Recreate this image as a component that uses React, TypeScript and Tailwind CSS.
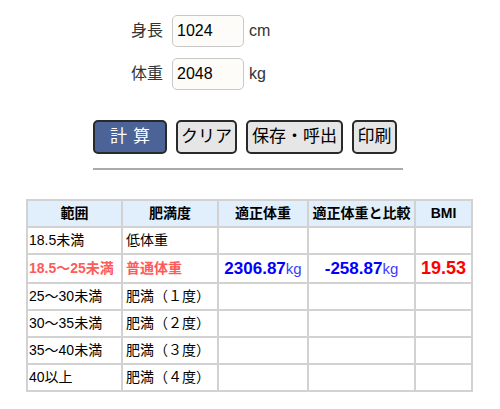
import React from 'react';

const font = "font-['Liberation_Sans','Noto_Sans_CJK_JP',sans-serif]";

type Row = { range: string; level: string; hit?: boolean };

const rows: Row[] = [
  { range: '18.5未満', level: '低体重' },
  { range: '18.5～25未満', level: '普通体重', hit: true },
  { range: '25～30未満', level: '肥満（１度）' },
  { range: '30～35未満', level: '肥満（２度）' },
  { range: '35～40未満', level: '肥満（３度）' },
  { range: '40以上', level: '肥満（４度）' },
];

const Field: React.FC<{ label: string; value: string; unit: string }> = ({ label, value, unit }) => (
  <div className="flex items-center">
    <span className="w-[32px] text-[16px] text-[#333]">{label}</span>
    <div className="ml-[9px] w-[72px] h-[32px] border border-[#c8c8c8] rounded-[5px] bg-[#fdfcf8] flex items-center px-[4px] text-[16px] text-black">
      {value}
    </div>
    <span className="ml-[5px] text-[16px] text-[#333]">{unit}</span>
  </div>
);

const Btn: React.FC<{ children: React.ReactNode; primary?: boolean; w: string }> = ({ children, primary, w }) => (
  <button
    className={`${w} h-[34px] rounded-[5px] border-2 border-[#2a2a2a] text-[17px] flex items-center justify-center ${
      primary ? 'bg-[#4b6397] text-white tracking-[6px] pl-[6px]' : 'bg-[#e6e6e6] text-black'
    }`}
  >
    {children}
  </button>
);

export default function App() {
  return (
    <div className={`${font} w-[500px] h-[409px] bg-white overflow-hidden`}>
      {/* 入力 */}
      <div className="pt-[15px] pl-[131px] flex flex-col gap-[11px]">
        <Field label="身長" value="1024" unit="cm" />
        <Field label="体重" value="2048" unit="kg" />
      </div>

      {/* ボタン */}
      <div className="w-[310px] ml-[93px] mt-[30px]">
        <div className="flex gap-[9px]">
          <Btn primary w="w-[74px]">計算</Btn>
          <Btn w="w-[61px]">クリア</Btn>
          <Btn w="w-[97px]">保存・呼出</Btn>
          <Btn w="w-[45px]">印刷</Btn>
        </div>
        <div className="mt-[14px] h-[2px] bg-[#aaaaaa]" />
      </div>

      {/* 結果テーブル */}
      <table className="ml-[26px] mt-[29px] border-collapse text-[14px] text-black table-fixed w-[445px]">
        <colgroup>
          <col className="w-[95px]" />
          <col className="w-[96px]" />
          <col className="w-[90px]" />
          <col className="w-[107px]" />
          <col className="w-[57px]" />
        </colgroup>
        <thead>
          <tr className="h-[27px] bg-[#e1eefb]">
            {['範囲', '肥満度', '適正体重', '適正体重と比較', 'BMI'].map((h) => (
              <th key={h} className="border-2 border-[#d2d2d2] font-bold text-center p-0">
                {h}
              </th>
            ))}
          </tr>
        </thead>
        <tbody>
          {rows.map((r) => (
            <tr key={r.range} className={r.hit ? 'h-[28px]' : 'h-[27px]'}>
              <td className={`border-2 border-[#d2d2d2] px-[1px] whitespace-nowrap ${r.hit ? 'text-[#ff5a5a] font-bold' : ''}`}>
                {r.range}
              </td>
              <td className={`border-2 border-[#d2d2d2] px-[3px] whitespace-nowrap ${r.hit ? 'text-[#ff5a5a] font-bold' : ''}`}>
                {r.level}
              </td>
              <td className="border-2 border-[#d2d2d2] text-center whitespace-nowrap text-[#0000ff]">
                {r.hit && (
                  <>
                    <span className="font-bold text-[17px]">2306.87</span>
                    <span className="text-[15px] text-[#3b3bff]">kg</span>
                  </>
                )}
              </td>
              <td className="border-2 border-[#d2d2d2] text-center whitespace-nowrap text-[#0000ff]">
                {r.hit && (
                  <>
                    <span className="font-bold text-[17px]">-258.87</span>
                    <span className="text-[15px] text-[#3b3bff]">kg</span>
                  </>
                )}
              </td>
              <td className="border-2 border-[#d2d2d2] text-center whitespace-nowrap">
                {r.hit && <span className="font-bold text-[18px] text-[#ff0000]">19.53</span>}
              </td>
            </tr>
          ))}
        </tbody>
      </table>
    </div>
  );
}
